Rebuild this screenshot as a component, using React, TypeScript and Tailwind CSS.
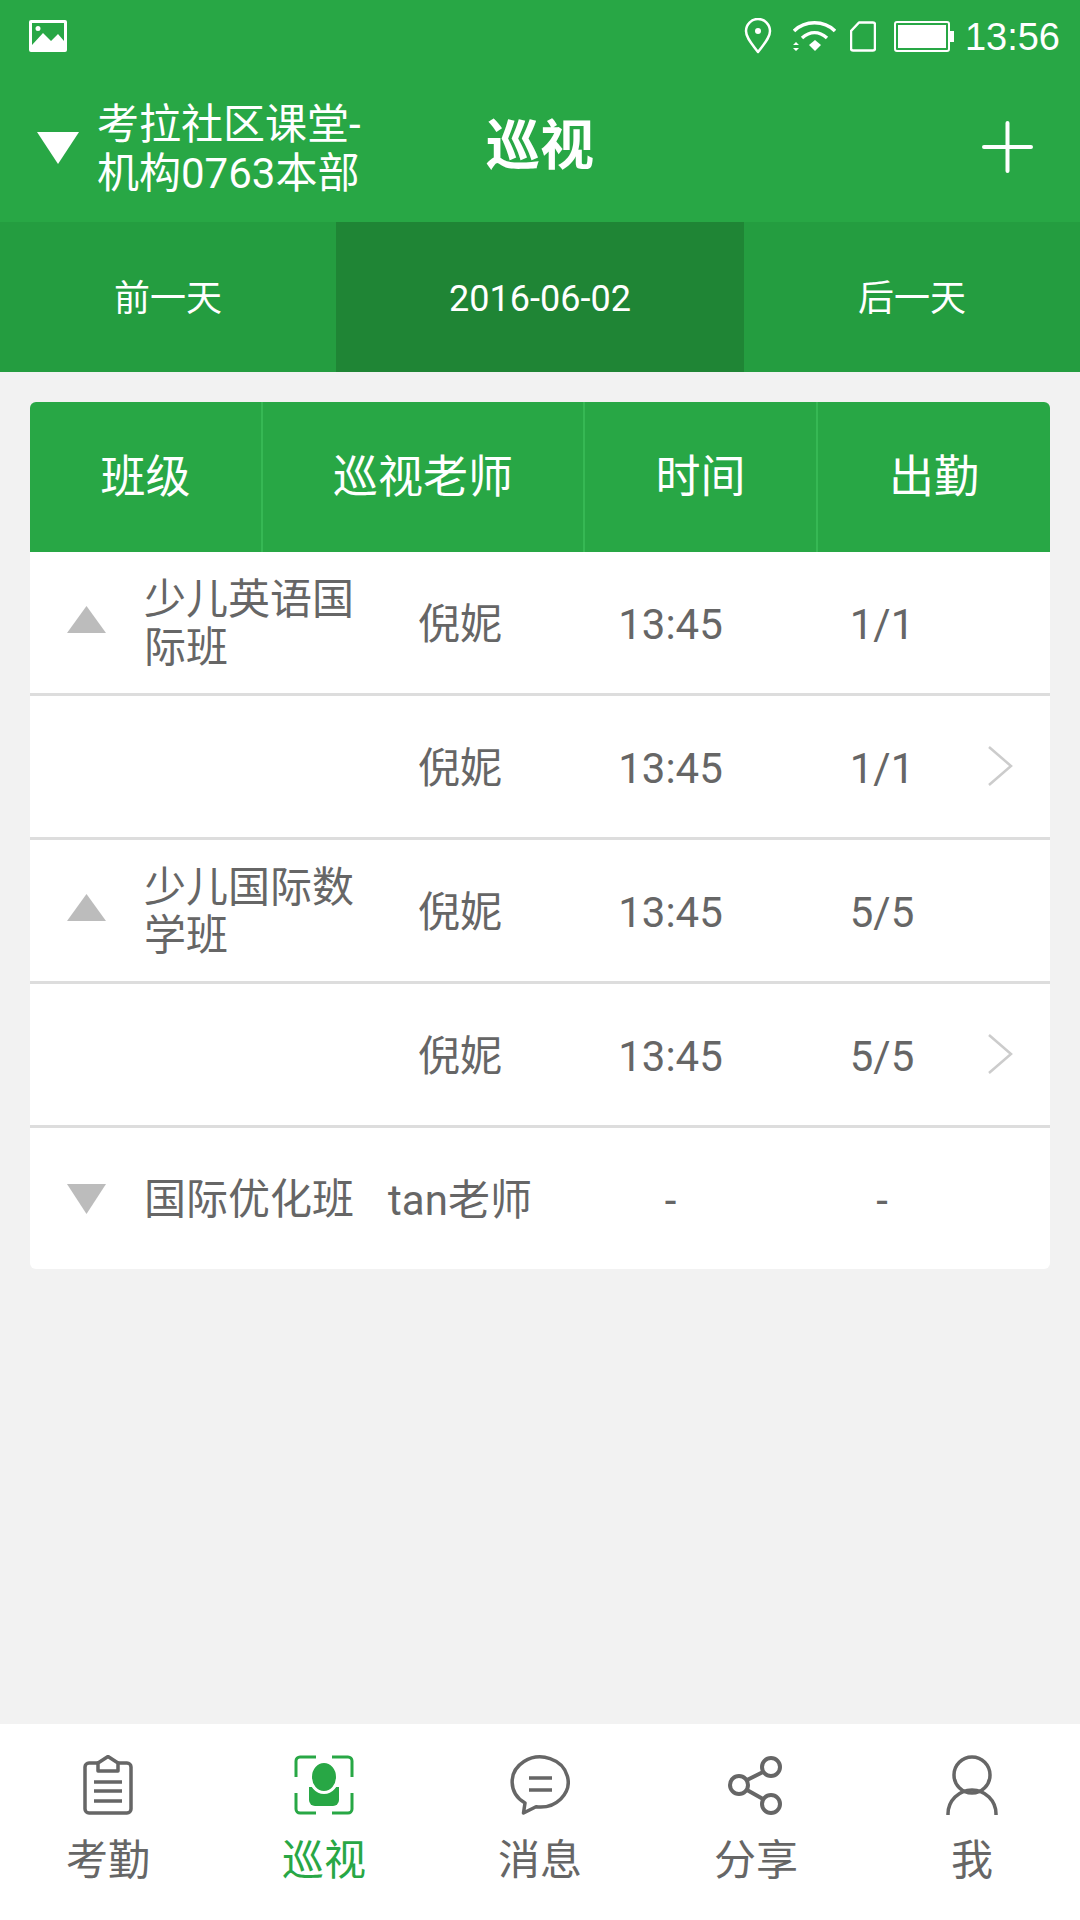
import React from "react";

const rows = [
  { arrow: "up", name: "少儿英语国际班", teacher: "倪妮", time: "13:45", count: "1/1", chevron: false },
  { arrow: "", name: "", teacher: "倪妮", time: "13:45", count: "1/1", chevron: true },
  { arrow: "up", name: "少儿国际数学班", teacher: "倪妮", time: "13:45", count: "5/5", chevron: false },
  { arrow: "", name: "", teacher: "倪妮", time: "13:45", count: "5/5", chevron: true },
  { arrow: "down", name: "国际优化班", teacher: "tan老师", time: "-", count: "-", chevron: false },
];

const StatusIcons = () => (
  <div className="flex items-center">
    <svg width="28" height="36" viewBox="0 0 28 36" fill="none" stroke="white" strokeWidth="2.5">
      <path d="M14 34C8 26 2 20 2 13a12 12 0 0 1 24 0c0 7-6 13-12 21z" strokeLinejoin="round" />
      <circle cx="14" cy="13" r="3" fill="white" stroke="none" />
    </svg>
    <svg className="ml-[21px]" width="43" height="33" viewBox="0 0 43 33" fill="none" stroke="white">
      <path d="M1 11C12 0 31 0 42 11" strokeWidth="3.5" />
      <path d="M9 18C17 11 26 11 34 18" strokeWidth="3.5" />
      <path d="M16 25l6-5 6 5-6 6z" fill="white" stroke="none" />
      <path d="M0 25l3-3 3 3zM0 28l3 3 3-3z" fill="white" stroke="none" />
    </svg>
    <svg className="ml-[14px]" width="26" height="31" viewBox="0 0 26 31" fill="none" stroke="white" strokeWidth="2.5">
      <path d="M9 1.500H23a2 2 0 0 1 2 2V27.500a2 2 0 0 1-2 2H3a2 2 0 0 1-2-2V10z" strokeLinejoin="round" />
    </svg>
    <svg className="ml-[18px]" width="60" height="31" viewBox="0 0 60 31" fill="none">
      <rect x="1" y="1" width="54" height="29" rx="2" stroke="white" strokeWidth="2" />
      <rect x="4" y="4" width="48" height="23" fill="white" />
      <rect x="56" y="10" width="4" height="11" fill="white" />
    </svg>
  </div>
);

const Triangle = ({ dir }: { dir: string }) =>
  dir === "up" ? (
    <svg className="-mt-[6px]" width="39" height="27" viewBox="0 0 39 27">
      <path d="M19.500 0L39 27H0z" fill="#bcbcbc" />
    </svg>
  ) : (
    <svg width="39" height="30" viewBox="0 0 39 30">
      <path d="M0 0H39L19.500 30z" fill="#bcbcbc" />
    </svg>
  );

const navItems = [
  {
    label: "考勤",
    icon: (
      <svg width="60" height="60" viewBox="0 0 60 60" fill="none" stroke="#666666" strokeWidth="3.5" strokeLinejoin="round">
        <path d="M20 8H11a4 4 0 0 0-4 4V54a4 4 0 0 0 4 4H49a4 4 0 0 0 4-4V12a4 4 0 0 0-4-4H40" />
        <path d="M20 16V8L30 1.500 40 8V16z" />
        <path d="M16 27H44M16 36H44M16 46H44" />
      </svg>
    ),
  },
  {
    label: "巡视",
    active: true,
    icon: (
      <svg width="60" height="60" viewBox="0 0 60 60" fill="none">
        <path d="M22 2H6a4 4 0 0 0-4 4V22M38 2H54a4 4 0 0 1 4 4V22M22 58H6a4 4 0 0 1-4-4V38M38 58H54a4 4 0 0 0 4-4V38" stroke="#28a745" strokeWidth="3" />
        <path d="M15 32h30v13a6 6 0 0 1-6 6H21a6 6 0 0 1-6-6z" fill="#28a745" />
        <ellipse cx="30" cy="22" rx="13.500" ry="15.500" fill="#28a745" stroke="white" strokeWidth="3" />
      </svg>
    ),
  },
  {
    label: "消息",
    icon: (
      <svg width="60" height="60" viewBox="0 0 60 60" fill="none" stroke="#666666" strokeWidth="3.5" strokeLinejoin="round">
        <path d="M15 48L13.500 58 26 51.700A28 25 0 1 0 15 48z" />
        <path d="M19 23H42M19 35H42" />
      </svg>
    ),
  },
  {
    label: "分享",
    icon: (
      <svg width="60" height="60" viewBox="0 0 60 60" fill="none" stroke="#666666" strokeWidth="4">
        <circle cx="45" cy="12" r="9" />
        <circle cx="13" cy="30" r="9" />
        <circle cx="45" cy="49" r="9" />
        <path d="M21 25L37 17M21 35L37 44" />
      </svg>
    ),
  },
  {
    label: "我",
    icon: (
      <svg width="60" height="60" viewBox="0 0 60 60" fill="none" stroke="#666666" strokeWidth="3.5">
        <circle cx="30" cy="20" r="18" />
        <path d="M6 60V59a24 24 0 0 1 48 0V60" />
      </svg>
    ),
  },
];

export default function App() {
  return (
    <div className="flex h-[1920px] w-[1080px] flex-col overflow-hidden bg-[#f2f2f2] font-['Roboto','Noto_Sans_CJK_SC',sans-serif]">
      {/* Status bar */}
      <div className="flex h-[72px] items-center justify-between bg-[#28a745] pl-[29px] pr-[20px]">
        <svg width="38" height="32" viewBox="0 0 38 32">
          <path
            fillRule="evenodd"
            d="M2 0H36a2 2 0 0 1 2 2V30a2 2 0 0 1-2 2H2a2 2 0 0 1-2-2V2a2 2 0 0 1 2-2zM3 3V25L14 13 22 21 29 14 35 21V3zM9 6a2.500 2.500 0 1 1 0 5 2.500 2.500 0 0 1 0-5z"
            fill="white"
          />
        </svg>
        <div className="flex items-center">
          <StatusIcons />
          <span className="ml-[11px] pt-[2px] font-['Liberation_Sans',sans-serif] text-[38px] leading-[40px] text-white">13:56</span>
        </div>
      </div>

      {/* Title bar */}
      <div className="grid h-[150px] grid-cols-[1fr_auto_1fr] items-center bg-[#28a745] px-[37px]">
        <div className="flex items-center">
          <svg width="42" height="32" viewBox="0 0 42 32" className="mt-[1px]">
            <path d="M0 0H42L21 32z" fill="white" />
          </svg>
          <div className="ml-[18px] pt-[3px] text-[42px] leading-[49px] whitespace-nowrap text-white">
            <div>考拉社区课堂-</div>
            <div>机构0763本部</div>
          </div>
        </div>
        <div className="text-[54px] leading-[60px] font-bold text-white">巡视</div>
        <div className="flex justify-end pr-[10px]">
          <svg width="51" height="52" viewBox="0 0 51 52" stroke="white" strokeWidth="4" strokeLinecap="round">
            <path d="M2 26H49M25.500 2V50" />
          </svg>
        </div>
      </div>

      {/* Date switcher */}
      <div className="grid h-[150px] grid-cols-[336px_408px_336px] bg-[#249d40] text-[36px] text-white">
        <div className="flex items-center justify-center pt-[4px]">前一天</div>
        <div className="flex items-center justify-center bg-[#1f8535] pt-[4px]">2016-06-02</div>
        <div className="flex items-center justify-center pt-[4px]">后一天</div>
      </div>

      {/* Table */}
      <div className="flex-1 px-[30px] pt-[30px]">
        <div className="grid h-[150px] grid-cols-[233px_322px_233px_232px] rounded-t-[6px] bg-[#28a745] text-[45px] text-white">
          <div className="flex items-center justify-center border-r-[2px] border-[#36b854] pt-[2px]">班级</div>
          <div className="flex items-center justify-center border-r-[2px] border-[#36b854] pt-[2px]">巡视老师</div>
          <div className="flex items-center justify-center border-r-[2px] border-[#36b854] pt-[2px]">时间</div>
          <div className="flex items-center justify-center pt-[2px]">出勤</div>
        </div>
        <div className="rounded-b-[6px] bg-white text-[42px] text-[#666666]">
          {rows.map((row, index) => (
            <div
              key={index}
              className={
                index < rows.length - 1
                  ? "grid h-[144px] grid-cols-[114px_214px_204px_218px_204px_66px] items-center border-b-[3px] border-[#dddddd]"
                  : "grid h-[141px] grid-cols-[114px_214px_204px_218px_204px_66px] items-center"
              }
            >
              <div className="flex justify-center pr-[2px]">{row.arrow && <Triangle dir={row.arrow} />}</div>
              <div className="pt-[2px] leading-[48px]">{row.name}</div>
              <div className="pt-[4px] text-center">{row.teacher}</div>
              <div className="pt-[4px] pr-[1px] text-center">{row.time}</div>
              <div className="pt-[4px] text-center">{row.count}</div>
              <div className="pl-[4px]">
                {row.chevron && (
                  <svg className="-mt-[2px]" width="25" height="40" viewBox="0 0 25 40" fill="none" stroke="#cccccc" strokeWidth="2.5">
                    <path d="M1 1L23 20 1 39" />
                  </svg>
                )}
              </div>
            </div>
          ))}
        </div>
      </div>

      {/* Bottom nav */}
      <div className="grid h-[196px] grid-cols-5 bg-white pt-[31px]">
        {navItems.map((item) => (
          <div key={item.label} className="flex flex-col items-center">
            {item.icon}
            <div className={item.active ? "mt-[21px] text-[42px] leading-[50px] text-[#28a745]" : "mt-[21px] text-[42px] leading-[50px] text-[#666666]"}>
              {item.label}
            </div>
          </div>
        ))}
      </div>
    </div>
  );
}
